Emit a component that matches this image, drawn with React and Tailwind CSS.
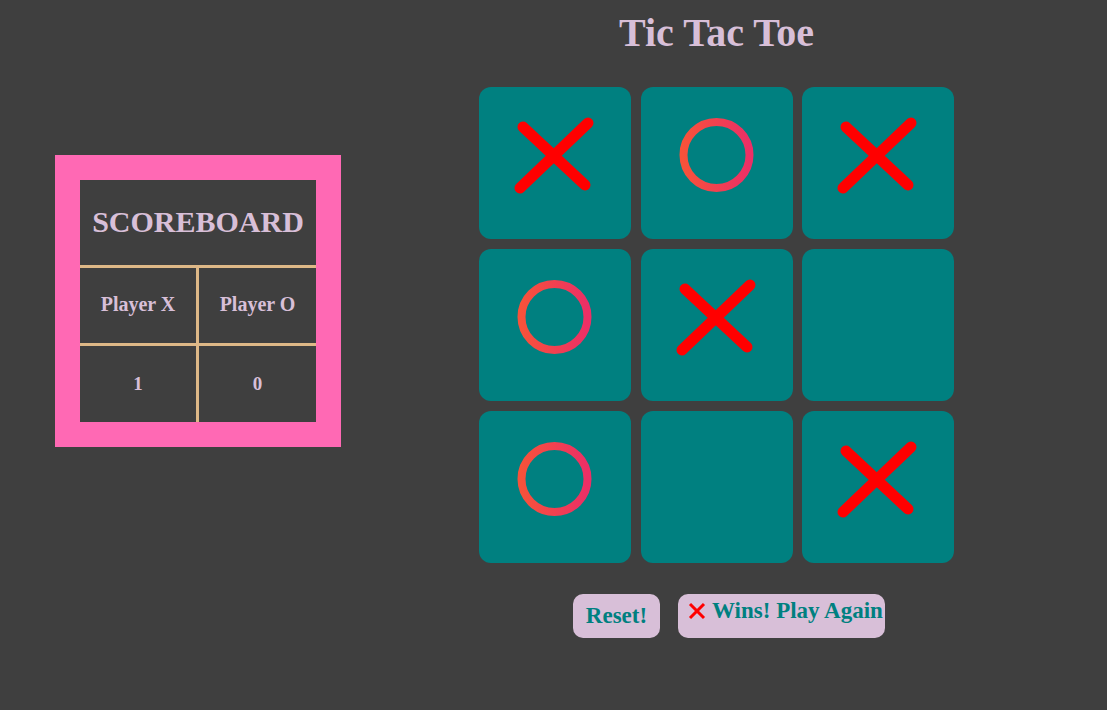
const board = ["X", "O", "X", "O", "X", null, "O", null, "X"];

function XMark() {
  return (
    <svg width="152" height="152" viewBox="0 0 152 152">
      <g stroke="#ff0000" strokeWidth="11" strokeLinecap="round" fill="none">
        <line x1="44" y1="40" x2="106" y2="98" />
        <line x1="109" y1="36" x2="41" y2="101" />
      </g>
    </svg>
  );
}

function OMark() {
  return (
    <svg width="152" height="152" viewBox="0 0 152 152">
      <defs>
        <linearGradient id="ograd" x1="0" y1="0" x2="1" y2="0">
          <stop offset="0%" stopColor="#f7523a" />
          <stop offset="100%" stopColor="#ec2f66" />
        </linearGradient>
      </defs>
      <circle cx="75.5" cy="68" r="33" stroke="url(#ograd)" strokeWidth="8" fill="none" />
    </svg>
  );
}

function Scoreboard() {
  return (
    <div className="w-[286px] h-[292px] border-[25px] border-[#ff69b4] text-[#d8bfd8] font-bold">
      <div className="h-[85px] flex items-center justify-center pb-[2px] text-[30px]">SCOREBOARD</div>
      <div className="flex border-t-[3px] border-[#deb887] h-[78px]">
        <div className="w-[119px] border-r-[3px] border-[#deb887] flex items-center justify-center pb-[3px] text-[20px]">Player X</div>
        <div className="flex-1 flex items-center justify-center pb-[3px] text-[20px]">Player O</div>
      </div>
      <div className="flex border-t-[3px] border-[#deb887] h-[79px]">
        <div className="w-[119px] border-r-[3px] border-[#deb887] flex items-center justify-center text-[19px]">1</div>
        <div className="flex-1 flex items-center justify-center text-[19px]">0</div>
      </div>
    </div>
  );
}

export default function App() {
  return (
    <div className="h-[710px] bg-[#3f3f3f] flex font-['Liberation_Serif',serif]">
      <div className="pl-[55px] pt-[155px]">
        <Scoreboard />
      </div>
      <div className="ml-[138px] w-[475px] flex flex-col items-center">
        <h1 className="pt-[13px] leading-none text-[40px] font-bold text-[#d8bfd8]">Tic Tac Toe</h1>
        <div className="mt-[34px] grid grid-cols-[repeat(3,152px)] gap-y-[10px] gap-x-[9.5px]">
          {board.map((v, i) => (
            <div key={i} className="w-[152px] h-[152px] bg-[#008080] rounded-[12px]">
              {v === "X" && <XMark />}
              {v === "O" && <OMark />}
            </div>
          ))}
        </div>
        <div className="self-start ml-[94px] mt-[31px] flex gap-[18px]">
          <button className="h-[44px] w-[87px] rounded-[10px] bg-[#d8bfd8] text-[#008080] font-bold text-[23px] flex items-center justify-center">
            Reset!
          </button>
          <button className="h-[44px] w-[207px] rounded-[10px] bg-[#d8bfd8] text-[#008080] font-bold text-[23px] flex items-center pl-[10px] pb-[10px] whitespace-nowrap">
            <svg width="18" height="18" viewBox="0 0 18 18" className="mr-[6px]">
              <g stroke="#ff0000" strokeWidth="3" fill="none">
                <line x1="2" y1="2" x2="16" y2="16" />
                <line x1="16" y1="2" x2="2" y2="16" />
              </g>
            </svg>
            Wins! Play Again
          </button>
        </div>
      </div>
    </div>
  );
}
